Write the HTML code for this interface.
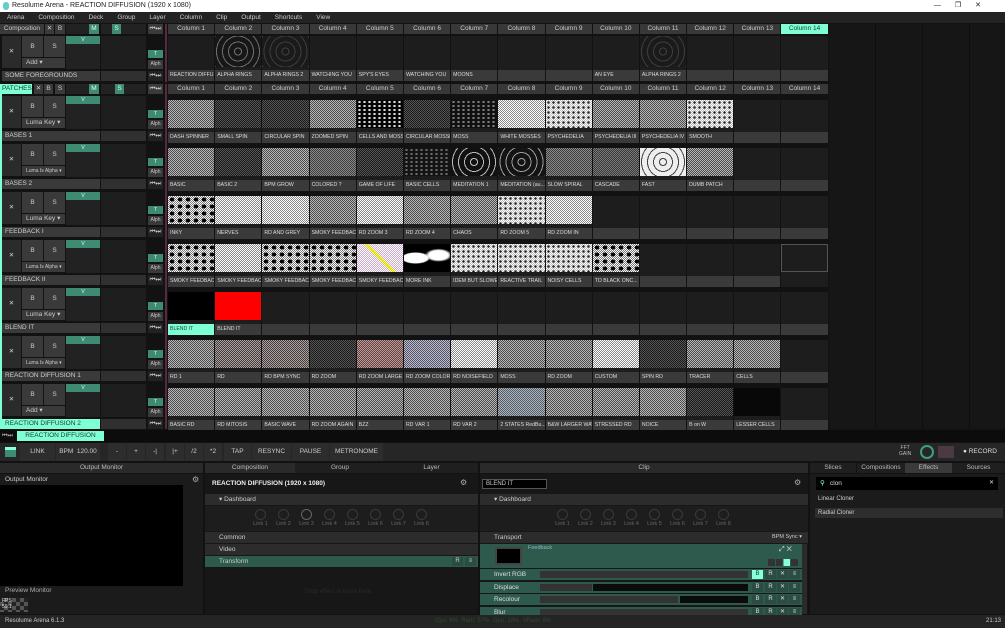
<!DOCTYPE html><html><head><meta charset="utf-8"><style>
*{box-sizing:border-box;margin:0;padding:0}
body{width:1005px;height:628px;background:#121212;font-family:"Liberation Sans",sans-serif;color:#ccc;overflow:hidden;position:relative;font-size:7px}
.a{position:absolute}
.tb{top:0;left:0;width:1005px;height:12px;background:#fff;color:#222;font-size:7px;line-height:12px;padding-left:12px}
.menu{top:12px;left:0;width:1005px;height:11px;background:#232323;color:#ccc;line-height:11px;font-size:6.5px}
.menu span{margin:0 7px}
.bt{position:absolute;background:#3a3a3a;color:#ccc;text-align:center;font-size:6.5px}
.gr{background:#3f8a72;color:#dff}
.cy{background:#7fffd4!important;color:#1a3a33!important}
.cols{position:absolute;left:168px;display:flex}
.cols>div{width:46.2px;margin-right:1px;flex:none}
.h>div{height:10px;background:#383838;text-align:center;line-height:10px;font-size:6.5px}
.c>div{background:#1d1d1d}
.c .t{height:28px}
.c .l{height:11px;margin-top:4px;background:#3a3a3a;font-size:5.2px;line-height:11px;padding-left:2px;white-space:nowrap;overflow:hidden;color:#ddd}
.lay{position:absolute;left:0;width:166px;height:46px}
.sep{position:absolute;left:165px;width:2px;background:#5a2840}
.c .a1{background:repeating-conic-gradient(#b8b8b8 0 25%,#4a4a4a 0 50%) 0 0/2px 2px}
.c .b1{background:repeating-conic-gradient(#555 0 25%,#1a1a1a 0 50%) 0 0/2px 2px}
.c .c1{background:repeating-conic-gradient(#fff 0 25%,#888 0 50%) 0 0/2px 2px}
.c .d1{background:radial-gradient(#222 30%,transparent 40%) 0 0/5px 5px,repeating-conic-gradient(#fff 0 25%,#bbb 0 50%) 0 0/2px 2px}
.c .e1{background:radial-gradient(#ddd 30%,transparent 45%) 0 0/5px 4px,#050505}
.c .f1{background:radial-gradient(#000 35%,transparent 45%) 0 0/8px 7px,repeating-conic-gradient(#fff 0 25%,#777 0 50%) 0 0/2px 2px}
.c .r1{background:repeating-radial-gradient(circle,#111 0 3px,#bbb 3px 4px,#111 4px 6px)}
.c .k{background:#000}
.c .rd{background:#f00}
.c .col{background:repeating-conic-gradient(#9aa 0 25%,#533 0 50%) 0 0/2px 2px}
.pan{position:absolute;background:#1b1b1b}
.ph{position:absolute;height:10px;background:#2a2a2a;text-align:center;line-height:10px;font-size:6.5px;color:#bbb}
.row{position:absolute;height:11px;background:#2c2c2c;font-size:6.5px;line-height:11px;padding-left:14px;color:#ccc}
.kn{display:inline-block;width:20px;text-align:center;font-size:5.5px;color:#666;margin:0 1.5px}
.kn i{display:block;width:11px;height:11px;border:1.5px solid #3a3a3a;border-radius:50%;margin:0 auto 1px}
.fx{position:absolute;left:480px;width:322px;height:11px;background:#2e5a4e;font-size:6.5px;line-height:11px;padding-left:14px;color:#ddd}
.fx b{position:absolute;top:1px;width:11px;height:9px;background:#2a4c42;text-align:center;line-height:9px;font-weight:normal;font-size:6px}
</style></head><body>
<div class="a tb">Resolume Arena - REACTION DIFFUSION (1920 x 1080)<span style="position:absolute;right:10px;letter-spacing:14px">—❐✕</span></div>
<div class="a" style="left:3px;top:2px;width:6px;height:8px;background:#6cc;border-radius:3px"></div>
<div class="a menu"><span>Arena</span><span>Composition</span><span>Deck</span><span>Group</span><span>Layer</span><span>Column</span><span>Clip</span><span>Output</span><span>Shortcuts</span><span>View</span></div>

<div class="a" style="left:829px;top:24px;width:176px;height:405px;background:repeating-linear-gradient(90deg,#161616 0 46px,#0e0e0e 46px 47px)"></div>

<div class="bt" style="left:0;top:24px;width:44px;height:10px;line-height:10px">Composition</div>
<div class="bt" style="left:45px;top:24px;width:9px;height:10px;line-height:10px">✕</div>
<div class="bt" style="left:55px;top:24px;width:10px;height:10px;line-height:10px">B</div>
<div class="bt" style="left:66px;top:24px;width:33px;height:10px;background:#222"></div>
<div class="bt gr" style="left:89px;top:24px;width:10px;height:10px;line-height:10px">M</div>
<div class="bt" style="left:101px;top:24px;width:45px;height:10px;background:#222"></div>
<div class="bt gr" style="left:112px;top:24px;width:9px;height:10px;line-height:10px">S</div>
<div class="bt" style="left:148px;top:24px;width:15px;height:10px;line-height:10px">⏮⏭</div>
<div class="cols h" style="top:24px"><div>Column 1</div><div>Column 2</div><div>Column 3</div><div>Column 4</div><div>Column 5</div><div>Column 6</div><div>Column 7</div><div>Column 8</div><div>Column 9</div><div>Column 10</div><div>Column 11</div><div>Column 12</div><div>Column 13</div><div class="cy">Column 14</div></div>

<div class="bt cy" style="left:0;top:84px;width:32px;height:10px;line-height:10px;text-align:left;padding-left:2px">PATCHES</div>
<div class="bt" style="left:34px;top:84px;width:9px;height:10px;line-height:10px">✕</div>
<div class="bt" style="left:44px;top:84px;width:9px;height:10px;line-height:10px">B</div>
<div class="bt" style="left:55px;top:84px;width:10px;height:10px;line-height:10px">S</div>
<div class="bt" style="left:66px;top:84px;width:33px;height:10px;background:#222"></div>
<div class="bt gr" style="left:89px;top:84px;width:10px;height:10px;line-height:10px">M</div>
<div class="bt" style="left:101px;top:84px;width:45px;height:10px;background:#222"></div>
<div class="bt gr" style="left:115px;top:84px;width:9px;height:10px;line-height:10px">S</div>
<div class="bt" style="left:148px;top:84px;width:15px;height:10px;line-height:10px">⏮⏭</div>
<div class="cols h" style="top:84px"><div>Column 1</div><div>Column 2</div><div>Column 3</div><div>Column 4</div><div>Column 5</div><div>Column 6</div><div>Column 7</div><div>Column 8</div><div>Column 9</div><div>Column 10</div><div>Column 11</div><div>Column 12</div><div>Column 13</div><div>Column 14</div></div>

<div class="a" style="left:0;top:84px;width:2px;height:345px;background:#7fffd4"></div>
<div class="sep" style="top:24px;height:58px"></div>
<div class="sep" style="top:84px;height:345px"></div>

<div class="lay" style="top:36px">
<div class="bt" style="left:2px;top:0;width:19px;height:32px;line-height:32px;background:#2b2b2b">✕</div>
<div class="bt" style="left:22px;top:0;width:21px;height:21px;line-height:21px">B</div>
<div class="bt" style="left:44px;top:0;width:21px;height:21px;line-height:21px">S</div>
<div class="bt" style="left:22px;top:22px;width:43px;height:10px;line-height:10px;text-align:left;padding-left:4px">Add ▾</div>
<div class="bt gr" style="left:66px;top:0;width:34px;height:8px;line-height:8px;font-size:5px">V</div>
<div class="bt" style="left:66px;top:8px;width:34px;height:25px;background:#222"></div>
<div class="bt" style="left:101px;top:0;width:45px;height:33px;background:#1e1e1e"></div>
<div class="bt gr" style="left:148px;top:14px;width:15px;height:8px;line-height:8px;font-size:5px">T</div>
<div class="bt" style="left:148px;top:24px;width:15px;height:9px;line-height:9px;font-size:5px">Alph</div>
<div class="bt" style="left:2px;top:35px;width:98px;height:10px;line-height:10px;text-align:left;padding-left:3px">SOME FOREGROUNDS</div>
<div class="bt" style="left:101px;top:35px;width:45px;height:10px;background:#303030"></div>
<div class="bt" style="left:148px;top:35px;width:15px;height:10px;line-height:10px;background:#222">⏮⏭</div>
</div>
<div class="cols c" style="top:36px"><div><div class="t" style="height:31px"></div><div class="l" style="margin-top:3px">REACTION DIFFU...</div></div><div><div class="t r1" style="height:31px;opacity:.5"></div><div class="l" style="margin-top:3px">ALPHA RINGS</div></div><div><div class="t r1" style="height:31px;opacity:.2"></div><div class="l" style="margin-top:3px">ALPHA RINGS 2</div></div><div><div class="t" style="height:31px"></div><div class="l" style="margin-top:3px">WATCHING YOU</div></div><div><div class="t" style="height:31px"></div><div class="l" style="margin-top:3px">SPY'S EYES</div></div><div><div class="t" style="height:31px"></div><div class="l" style="margin-top:3px">WATCHING YOU</div></div><div><div class="t" style="height:31px"></div><div class="l" style="margin-top:3px">MOONS</div></div><div><div class="t" style="height:31px"></div><div class="l" style="margin-top:3px"></div></div><div><div class="t" style="height:31px"></div><div class="l" style="margin-top:3px"></div></div><div><div class="t" style="height:31px"></div><div class="l" style="margin-top:3px">AN EYE</div></div><div><div class="t r1" style="height:31px;opacity:.2"></div><div class="l" style="margin-top:3px">ALPHA RINGS 2</div></div><div><div class="t" style="height:31px"></div><div class="l" style="margin-top:3px"></div></div><div><div class="t" style="height:31px"></div><div class="l" style="margin-top:3px"></div></div><div><div class="t" style="height:31px"></div><div class="l" style="margin-top:3px"></div></div></div>

<div class="lay" style="top:96px"><div class="bt" style="left:2px;top:0;width:19px;height:32px;line-height:32px;background:#2b2b2b">✕</div><div class="bt" style="left:22px;top:0;width:21px;height:21px;line-height:21px">B</div><div class="bt" style="left:44px;top:0;width:21px;height:21px;line-height:21px">S</div><div class="bt" style="left:22px;top:22px;width:43px;height:10px;line-height:10px;text-align:left;padding-left:4px">Luma Key ▾</div><div class="bt gr" style="left:66px;top:0;width:34px;height:8px;line-height:8px;font-size:5px">V</div><div class="bt" style="left:66px;top:8px;width:34px;height:25px;background:#222"></div><div class="bt" style="left:101px;top:0;width:45px;height:33px;background:#1e1e1e"></div><div class="bt gr" style="left:148px;top:14px;width:15px;height:8px;line-height:8px;font-size:5px">T</div><div class="bt" style="left:148px;top:24px;width:15px;height:9px;line-height:9px;font-size:5px">Alph</div><div class="bt" style="left:2px;top:35px;width:98px;height:10px;line-height:10px;text-align:left;padding-left:3px">BASES 1</div><div class="bt" style="left:101px;top:35px;width:45px;height:10px;background:#303030"></div><div class="bt" style="left:148px;top:35px;width:15px;height:10px;line-height:10px;background:#222">⏮⏭</div></div>
<div class="cols c" style="top:100px"><div><div class="t a1"></div><div class="l">DASH SPINNER</div></div><div><div class="t b1"></div><div class="l">SMALL SPIN</div></div><div><div class="t b1"></div><div class="l">CIRCULAR SPIN</div></div><div><div class="t a1"></div><div class="l">ZOOMED SPIN</div></div><div><div class="t e1"></div><div class="l">CELLS AND MOSSES</div></div><div><div class="t b1"></div><div class="l">CIRCULAR MOSSES</div></div><div><div class="t e1" style="opacity:.5"></div><div class="l">MOSS</div></div><div><div class="t c1"></div><div class="l">WHITE MOSSES</div></div><div><div class="t d1"></div><div class="l">PSYCHEDELIA</div></div><div><div class="t a1"></div><div class="l">PSYCHEDELIA III</div></div><div><div class="t a1"></div><div class="l">PSYCHEDELIA IV</div></div><div><div class="t d1"></div><div class="l">SMOOTH</div></div><div><div class="t"></div><div class="l"></div></div><div><div class="t"></div><div class="l"></div></div></div>

<div class="lay" style="top:144px"><div class="bt" style="left:2px;top:0;width:19px;height:32px;line-height:32px;background:#2b2b2b">✕</div><div class="bt" style="left:22px;top:0;width:21px;height:21px;line-height:21px">B</div><div class="bt" style="left:44px;top:0;width:21px;height:21px;line-height:21px">S</div><div class="bt" style="left:22px;top:22px;width:43px;height:10px;line-height:10px;text-align:left;padding-left:4px;font-size:5px">Luma Is Alpha ▾</div><div class="bt gr" style="left:66px;top:0;width:34px;height:8px;line-height:8px;font-size:5px">V</div><div class="bt" style="left:66px;top:8px;width:34px;height:25px;background:#222"></div><div class="bt" style="left:101px;top:0;width:45px;height:33px;background:#1e1e1e"></div><div class="bt gr" style="left:148px;top:14px;width:15px;height:8px;line-height:8px;font-size:5px">T</div><div class="bt" style="left:148px;top:24px;width:15px;height:9px;line-height:9px;font-size:5px">Alph</div><div class="bt" style="left:2px;top:35px;width:98px;height:10px;line-height:10px;text-align:left;padding-left:3px">BASES 2</div><div class="bt" style="left:101px;top:35px;width:45px;height:10px;background:#303030"></div><div class="bt" style="left:148px;top:35px;width:15px;height:10px;line-height:10px;background:#222">⏮⏭</div></div>
<div class="cols c" style="top:148px"><div><div class="t a1"></div><div class="l">BASIC</div></div><div><div class="t b1"></div><div class="l">BASIC 2</div></div><div><div class="t a1"></div><div class="l">BPM GROW</div></div><div><div class="t a1" style="opacity:.7"></div><div class="l">COLORED ?</div></div><div><div class="t b1"></div><div class="l">GAME OF LIFE</div></div><div><div class="t e1" style="opacity:.4"></div><div class="l">BASIC CELLS</div></div><div><div class="t r1"></div><div class="l">MEDITATION 1</div></div><div><div class="t r1" style="opacity:.8"></div><div class="l">MEDITATION (au...</div></div><div><div class="t a1" style="opacity:.7"></div><div class="l">SLOW SPIRAL</div></div><div><div class="t a1" style="opacity:.6"></div><div class="l">CASCADE</div></div><div><div class="t r1" style="filter:invert(1)"></div><div class="l">FAST</div></div><div><div class="t a1"></div><div class="l">DUMB PATCH</div></div><div><div class="t"></div><div class="l"></div></div><div><div class="t"></div><div class="l"></div></div></div>

<div class="lay" style="top:192px"><div class="bt" style="left:2px;top:0;width:19px;height:32px;line-height:32px;background:#2b2b2b">✕</div><div class="bt" style="left:22px;top:0;width:21px;height:21px;line-height:21px">B</div><div class="bt" style="left:44px;top:0;width:21px;height:21px;line-height:21px">S</div><div class="bt" style="left:22px;top:22px;width:43px;height:10px;line-height:10px;text-align:left;padding-left:4px">Luma Key ▾</div><div class="bt gr" style="left:66px;top:0;width:34px;height:8px;line-height:8px;font-size:5px">V</div><div class="bt" style="left:66px;top:8px;width:34px;height:25px;background:#222"></div><div class="bt" style="left:101px;top:0;width:45px;height:33px;background:#1e1e1e"></div><div class="bt gr" style="left:148px;top:14px;width:15px;height:8px;line-height:8px;font-size:5px">T</div><div class="bt" style="left:148px;top:24px;width:15px;height:9px;line-height:9px;font-size:5px">Alph</div><div class="bt" style="left:2px;top:35px;width:98px;height:10px;line-height:10px;text-align:left;padding-left:3px">FEEDBACK I</div><div class="bt" style="left:101px;top:35px;width:45px;height:10px;background:#303030"></div><div class="bt" style="left:148px;top:35px;width:15px;height:10px;line-height:10px;background:#222">⏮⏭</div></div>
<div class="cols c" style="top:196px"><div><div class="t f1"></div><div class="l">INKY</div></div><div><div class="t c1"></div><div class="l">NERVES</div></div><div><div class="t c1"></div><div class="l">RD AND GREY</div></div><div><div class="t a1"></div><div class="l">SMOKY FEEDBACK</div></div><div><div class="t c1"></div><div class="l">RD ZOOM 3</div></div><div><div class="t a1"></div><div class="l">RD ZOOM 4</div></div><div><div class="t a1"></div><div class="l">CHAOS</div></div><div><div class="t d1"></div><div class="l">RD ZOOM 5</div></div><div><div class="t c1"></div><div class="l">RD ZOOM IN</div></div><div><div class="t"></div><div class="l"></div></div><div><div class="t"></div><div class="l"></div></div><div><div class="t"></div><div class="l"></div></div><div><div class="t"></div><div class="l"></div></div><div><div class="t"></div><div class="l"></div></div></div>

<div class="lay" style="top:240px"><div class="bt" style="left:2px;top:0;width:19px;height:32px;line-height:32px;background:#2b2b2b">✕</div><div class="bt" style="left:22px;top:0;width:21px;height:21px;line-height:21px">B</div><div class="bt" style="left:44px;top:0;width:21px;height:21px;line-height:21px">S</div><div class="bt" style="left:22px;top:22px;width:43px;height:10px;line-height:10px;text-align:left;padding-left:4px;font-size:5px">Luma Is Alpha ▾</div><div class="bt gr" style="left:66px;top:0;width:34px;height:8px;line-height:8px;font-size:5px">V</div><div class="bt" style="left:66px;top:8px;width:34px;height:25px;background:#222"></div><div class="bt" style="left:101px;top:0;width:45px;height:33px;background:#1e1e1e"></div><div class="bt gr" style="left:148px;top:14px;width:15px;height:8px;line-height:8px;font-size:5px">T</div><div class="bt" style="left:148px;top:24px;width:15px;height:9px;line-height:9px;font-size:5px">Alph</div><div class="bt" style="left:2px;top:35px;width:98px;height:10px;line-height:10px;text-align:left;padding-left:3px">FEEDBACK II</div><div class="bt" style="left:101px;top:35px;width:45px;height:10px;background:#303030"></div><div class="bt" style="left:148px;top:35px;width:15px;height:10px;line-height:10px;background:#222">⏮⏭</div></div>
<div class="cols c" style="top:244px"><div><div class="t f1"></div><div class="l">SMOKY FEEDBACK</div></div><div><div class="t c1"></div><div class="l">SMOKY FEEDBACK</div></div><div><div class="t f1"></div><div class="l">SMOKY FEEDBACK</div></div><div><div class="t f1"></div><div class="l">SMOKY FEEDBACK</div></div><div><div class="t" style="background:linear-gradient(45deg,transparent 45%,#ee0 50%,transparent 55%),repeating-conic-gradient(#fff 0 25%,#cac 0 50%) 0 0/2px 2px"></div><div class="l">SMOKY FEEDBACK</div></div><div><div class="t" style="background:radial-gradient(ellipse at 25% 50%,#fff 25%,transparent 30%),radial-gradient(ellipse at 75% 40%,#fff 20%,transparent 28%),#000"></div><div class="l">MORE INK</div></div><div><div class="t d1"></div><div class="l">IDEM BUT SLOWER</div></div><div><div class="t d1"></div><div class="l">REACTIVE TRAIL</div></div><div><div class="t d1"></div><div class="l">NOISY CELLS</div></div><div><div class="t f1"></div><div class="l">TO BLACK ONC...</div></div><div><div class="t"></div><div class="l"></div></div><div><div class="t"></div><div class="l"></div></div><div><div class="t"></div><div class="l"></div></div><div><div class="t" style="border:1px solid #555"></div><div class="l" style="background:#1d1d1d"></div></div></div>

<div class="lay" style="top:288px"><div class="bt" style="left:2px;top:0;width:19px;height:32px;line-height:32px;background:#2b2b2b">✕</div><div class="bt" style="left:22px;top:0;width:21px;height:21px;line-height:21px">B</div><div class="bt" style="left:44px;top:0;width:21px;height:21px;line-height:21px">S</div><div class="bt" style="left:22px;top:22px;width:43px;height:10px;line-height:10px;text-align:left;padding-left:4px">Luma Key ▾</div><div class="bt gr" style="left:66px;top:0;width:34px;height:8px;line-height:8px;font-size:5px">V</div><div class="bt" style="left:66px;top:8px;width:34px;height:25px;background:#222"></div><div class="bt" style="left:101px;top:0;width:45px;height:33px;background:#1e1e1e"></div><div class="bt gr" style="left:148px;top:14px;width:15px;height:8px;line-height:8px;font-size:5px">T</div><div class="bt" style="left:148px;top:24px;width:15px;height:9px;line-height:9px;font-size:5px">Alph</div><div class="bt" style="left:2px;top:35px;width:98px;height:10px;line-height:10px;text-align:left;padding-left:3px">BLEND IT</div><div class="bt" style="left:101px;top:35px;width:45px;height:10px;background:#303030"></div><div class="bt" style="left:148px;top:35px;width:15px;height:10px;line-height:10px;background:#222">⏮⏭</div></div>
<div class="cols c" style="top:292px"><div><div class="t k"></div><div class="l cy">BLEND IT</div></div><div><div class="t rd"></div><div class="l">BLEND IT</div></div><div><div class="t"></div><div class="l"></div></div><div><div class="t"></div><div class="l"></div></div><div><div class="t"></div><div class="l"></div></div><div><div class="t"></div><div class="l"></div></div><div><div class="t"></div><div class="l"></div></div><div><div class="t"></div><div class="l"></div></div><div><div class="t"></div><div class="l"></div></div><div><div class="t"></div><div class="l"></div></div><div><div class="t"></div><div class="l"></div></div><div><div class="t"></div><div class="l"></div></div><div><div class="t"></div><div class="l"></div></div><div><div class="t"></div><div class="l"></div></div></div>

<div class="lay" style="top:336px"><div class="bt" style="left:2px;top:0;width:19px;height:32px;line-height:32px;background:#2b2b2b">✕</div><div class="bt" style="left:22px;top:0;width:21px;height:21px;line-height:21px">B</div><div class="bt" style="left:44px;top:0;width:21px;height:21px;line-height:21px">S</div><div class="bt" style="left:22px;top:22px;width:43px;height:10px;line-height:10px;text-align:left;padding-left:4px;font-size:5px">Luma Is Alpha ▾</div><div class="bt gr" style="left:66px;top:0;width:34px;height:8px;line-height:8px;font-size:5px">V</div><div class="bt" style="left:66px;top:8px;width:34px;height:25px;background:#222"></div><div class="bt" style="left:101px;top:0;width:45px;height:33px;background:#1e1e1e"></div><div class="bt gr" style="left:148px;top:14px;width:15px;height:8px;line-height:8px;font-size:5px">T</div><div class="bt" style="left:148px;top:24px;width:15px;height:9px;line-height:9px;font-size:5px">Alph</div><div class="bt" style="left:2px;top:35px;width:98px;height:10px;line-height:10px;text-align:left;padding-left:3px">REACTION DIFFUSION 1</div><div class="bt" style="left:101px;top:35px;width:45px;height:10px;background:#303030"></div><div class="bt" style="left:148px;top:35px;width:15px;height:10px;line-height:10px;background:#222">⏮⏭</div></div>
<div class="cols c" style="top:340px"><div><div class="t a1"></div><div class="l">RD 1</div></div><div><div class="t col"></div><div class="l">RD</div></div><div><div class="t col"></div><div class="l">RD BPM SYNC</div></div><div><div class="t b1"></div><div class="l">RD ZOOM</div></div><div><div class="t" style="background:repeating-conic-gradient(#c99 0 25%,#544 0 50%) 0 0/2px 2px"></div><div class="l">RD ZOOM LARGE</div></div><div><div class="t" style="background:repeating-conic-gradient(#aca 0 25%,#648 0 50%) 0 0/2px 2px"></div><div class="l">RD ZOOM COLORED</div></div><div><div class="t c1"></div><div class="l">RD NOISEFIELD</div></div><div><div class="t a1"></div><div class="l">MOSS</div></div><div><div class="t a1"></div><div class="l">RD ZOOM</div></div><div><div class="t c1"></div><div class="l">CUSTOM</div></div><div><div class="t b1"></div><div class="l">SPIN RD</div></div><div><div class="t a1"></div><div class="l">TRACER</div></div><div><div class="t a1"></div><div class="l">CELLS</div></div><div><div class="t"></div><div class="l"></div></div></div>

<div class="lay" style="top:384px"><div class="bt" style="left:2px;top:0;width:19px;height:32px;line-height:32px;background:#2b2b2b">✕</div><div class="bt" style="left:22px;top:0;width:21px;height:21px;line-height:21px">B</div><div class="bt" style="left:44px;top:0;width:21px;height:21px;line-height:21px">S</div><div class="bt" style="left:22px;top:22px;width:43px;height:10px;line-height:10px;text-align:left;padding-left:4px">Add ▾</div><div class="bt gr" style="left:66px;top:0;width:34px;height:8px;line-height:8px;font-size:5px">V</div><div class="bt" style="left:66px;top:8px;width:34px;height:25px;background:#222"></div><div class="bt" style="left:101px;top:0;width:45px;height:33px;background:#1e1e1e"></div><div class="bt gr" style="left:148px;top:14px;width:15px;height:8px;line-height:8px;font-size:5px">T</div><div class="bt" style="left:148px;top:24px;width:15px;height:9px;line-height:9px;font-size:5px">Alph</div><div class="bt cy" style="left:2px;top:35px;width:98px;height:10px;line-height:10px;text-align:left;padding-left:3px">REACTION DIFFUSION 2</div><div class="bt" style="left:101px;top:35px;width:45px;height:10px;background:#303030"></div><div class="bt" style="left:148px;top:35px;width:15px;height:10px;line-height:10px;background:#222">⏮⏭</div></div>
<div class="cols c" style="top:388px"><div><div class="t a1"></div><div class="l">BASIC RD</div></div><div><div class="t a1"></div><div class="l">RD MITOSIS</div></div><div><div class="t a1"></div><div class="l">BASIC WAVE</div></div><div><div class="t a1"></div><div class="l">RD ZOOM AGAIN</div></div><div><div class="t a1"></div><div class="l">BZZ</div></div><div><div class="t a1"></div><div class="l">RD VAR 1</div></div><div><div class="t a1"></div><div class="l">RD VAR 2</div></div><div><div class="t" style="background:repeating-conic-gradient(#9c8 0 25%,#649 0 50%) 0 0/2px 2px"></div><div class="l">2 STATES RedBu...</div></div><div><div class="t a1"></div><div class="l">B&amp;W LARGER WAVE</div></div><div><div class="t a1"></div><div class="l">STRESSED RD</div></div><div><div class="t a1"></div><div class="l">NOICE</div></div><div><div class="t b1"></div><div class="l">B on W</div></div><div><div class="t" style="background:#080808"></div><div class="l">LESSER CELLS</div></div><div><div class="t"></div><div class="l"></div></div></div>

<div class="a" style="left:0;top:430px;width:1005px;height:12px;background:#0c0c0c"></div>
<div class="a" style="left:2px;top:433px;font-size:6px;color:#aaa">⏮⏭</div>
<div class="bt cy" style="left:17px;top:431px;width:87px;height:10px;line-height:10px">REACTION DIFFUSION</div>

<div class="a" style="left:0;top:443px;width:1005px;height:18px;background:#262626"></div>
<div class="a" style="left:5px;top:447px;width:11px;height:10px;background:#3f8a72;border-top:3px solid #8fd"></div>
<div class="bt" style="left:20px;top:443px;width:35px;height:18px;line-height:18px;background:#2d2d2d">LINK</div>
<div class="bt" style="left:56px;top:443px;width:44px;height:18px;line-height:18px;background:#2d2d2d">BPM &nbsp;120.00</div>
<div class="bt" style="left:108px;top:443px;width:18px;height:18px;line-height:18px;background:#2d2d2d">-</div>
<div class="bt" style="left:127px;top:443px;width:18px;height:18px;line-height:18px;background:#2d2d2d">+</div>
<div class="bt" style="left:146px;top:443px;width:18px;height:18px;line-height:18px;background:#2d2d2d">-|</div>
<div class="bt" style="left:166px;top:443px;width:18px;height:18px;line-height:18px;background:#2d2d2d">|+</div>
<div class="bt" style="left:185px;top:443px;width:18px;height:18px;line-height:18px;background:#2d2d2d">/2</div>
<div class="bt" style="left:204px;top:443px;width:18px;height:18px;line-height:18px;background:#2d2d2d">*2</div>
<div class="bt" style="left:224px;top:443px;width:27px;height:18px;line-height:18px;background:#2d2d2d">TAP</div>
<div class="bt" style="left:252px;top:443px;width:39px;height:18px;line-height:18px;background:#2d2d2d">RESYNC</div>
<div class="bt" style="left:292px;top:443px;width:37px;height:18px;line-height:18px;background:#2d2d2d">PAUSE</div>
<div class="bt" style="left:330px;top:443px;width:53px;height:18px;line-height:18px;background:#2d2d2d">METRONOME</div>
<div class="a" style="left:899px;top:446px;font-size:5px;line-height:5.5px;text-align:center;color:#bbb">FFT<br>GAIN</div>
<div class="a" style="left:920px;top:445px;width:14px;height:14px;border:2px solid #3f9c85;border-radius:50%"></div>
<div class="a" style="left:938px;top:446px;width:16px;height:12px;background:#4a3a44"></div>
<div class="a" style="left:963px;top:448px;font-size:6.5px;color:#ddd">● RECORD</div>

<div class="ph" style="left:0;top:463px;width:203px">Output Monitor</div>
<div class="ph" style="left:205px;top:463px;width:90px">Composition</div>
<div class="ph" style="left:295px;top:463px;width:90px;background:#1f1f1f">Group</div>
<div class="ph" style="left:385px;top:463px;width:93px;background:#1f1f1f">Layer</div>
<div class="ph" style="left:480px;top:463px;width:328px">Clip</div>
<div class="ph" style="left:810px;top:463px;width:46px;background:#1f1f1f">Slices</div>
<div class="ph" style="left:857px;top:463px;width:48px;background:#1f1f1f">Compositions</div>
<div class="ph" style="left:905px;top:463px;width:47px;background:#3a3a3a">Effects</div>
<div class="ph" style="left:952px;top:463px;width:53px;background:#1f1f1f">Sources</div>

<div class="pan" style="left:0;top:474px;width:203px;height:140px"></div>
<div class="a" style="left:5px;top:476px;font-size:6.5px">Output Monitor</div>
<div class="a" style="left:192px;top:475px;font-size:8px;color:#aaa">⚙</div>
<div class="a" style="left:0;top:485px;width:183px;height:101px;background:#000"></div>
<div class="a" style="left:5px;top:587px;font-size:6.5px;color:#aaa">Preview Monitor</div>
<div class="a" style="left:0;top:598px;width:28px;height:14px;background:repeating-conic-gradient(#555 0 25%,#222 0 50%) 0 0/8px 8px;font-size:5px;line-height:6px;color:#ddd;padding-left:2px">FPS<br>59.1</div>

<div class="pan" style="left:205px;top:474px;width:273px;height:140px;background:#171717"></div>
<div class="a" style="left:212px;top:480px;font-size:6.5px;font-weight:bold;color:#eee">REACTION DIFFUSION (1920 x 1080)</div>
<div class="a" style="left:460px;top:478px;font-size:8px;color:#aaa">⚙</div>
<div class="row" style="left:205px;top:494px;width:273px">▾ Dashboard</div>
<div class="a" style="left:205px;top:506px;width:273px;height:25px;background:#1d1d1d;padding-left:44px;padding-top:3px"><span class="kn"><i></i>Link 1</span><span class="kn"><i></i>Link 2</span><span class="kn"><i style="border-color:#666"></i>Link 3</span><span class="kn"><i></i>Link 4</span><span class="kn"><i></i>Link 5</span><span class="kn"><i></i>Link 6</span><span class="kn"><i></i>Link 7</span><span class="kn"><i></i>Link 8</span></div>
<div class="row" style="left:205px;top:532px;width:273px">Common</div>
<div class="row" style="left:205px;top:544px;width:273px">Video</div>
<div class="row" style="left:205px;top:556px;width:273px;background:#2e5a4e">Transform</div>
<div class="a" style="left:452px;top:557px;width:11px;height:9px;background:#2a4c42;font-size:6px;text-align:center;line-height:9px">R</div>
<div class="a" style="left:465px;top:557px;width:11px;height:9px;background:#2a4c42;font-size:6px;text-align:center;line-height:9px">≡</div>
<div class="a" style="left:305px;top:589px;font-size:6px;color:#2a2a2a">Drop effect or mask here.</div>

<div class="pan" style="left:480px;top:474px;width:328px;height:140px;background:#171717"></div>
<div class="a" style="left:482px;top:479px;width:65px;height:10px;border:1px solid #555;background:#000;font-size:6px;line-height:8px;padding-left:3px">BLEND IT</div>
<div class="a" style="left:794px;top:478px;font-size:8px;color:#aaa">⚙</div>
<div class="row" style="left:480px;top:494px;width:328px">▾ Dashboard</div>
<div class="a" style="left:480px;top:506px;width:328px;height:25px;background:#1d1d1d;padding-left:71px;padding-top:3px"><span class="kn"><i></i>Link 1</span><span class="kn"><i></i>Link 2</span><span class="kn"><i></i>Link 3</span><span class="kn"><i></i>Link 4</span><span class="kn"><i></i>Link 5</span><span class="kn"><i></i>Link 6</span><span class="kn"><i></i>Link 7</span><span class="kn"><i></i>Link 8</span></div>
<div class="row" style="left:480px;top:532px;width:328px">Transport<span style="position:absolute;right:6px;font-size:5.5px">BPM Sync ▾</span></div>
<div class="a" style="left:480px;top:544px;width:322px;height:24px;background:#2e5a4e"></div>
<div class="a" style="left:495px;top:547px;width:27px;height:18px;background:#000;border:2px solid #444"></div>
<div class="a" style="left:528px;top:545px;font-size:5.5px;color:#8bb">Feedback</div>
<div class="a" style="left:779px;top:546px;font-size:7px;color:#ddd">⤢ ✕</div>
<div class="a" style="left:768px;top:559px;width:30px;height:7px;background:linear-gradient(90deg,#333 0 24%,transparent 24% 26%,#333 26% 49%,transparent 49% 51%,#8fd 51% 74%,transparent 74% 76%,#333 76%)"></div>
<div class="fx" style="top:569px">Invert RGB<div class="a" style="left:60px;top:2px;width:208px;height:7px;background:#333"></div><b style="left:272px;background:#8fd;color:#143">B</b><b style="left:285px">R</b><b style="left:297px">✕</b><b style="left:309px">≡</b></div>
<div class="fx" style="top:582px">Displace<div class="a" style="left:60px;top:2px;width:52px;height:7px;background:#333"></div><div class="a" style="left:113px;top:2px;width:155px;height:7px;background:#0b0b0b"></div><b style="left:272px">B</b><b style="left:285px">R</b><b style="left:297px">✕</b><b style="left:309px">≡</b></div>
<div class="fx" style="top:594px">Recolour<div class="a" style="left:60px;top:2px;width:138px;height:7px;background:#333"></div><div class="a" style="left:200px;top:2px;width:68px;height:7px;background:#0b0b0b"></div><b style="left:272px">B</b><b style="left:285px">R</b><b style="left:297px">✕</b><b style="left:309px">≡</b></div>
<div class="fx" style="top:607px;height:8px">Blur<div class="a" style="left:60px;top:2px;width:208px;height:6px;background:#333"></div><b style="left:272px">B</b><b style="left:285px">R</b><b style="left:297px">✕</b><b style="left:309px">≡</b></div>
<div class="a" style="left:802px;top:544px;width:5px;height:70px;background:#2a2a2a"></div>

<div class="pan" style="left:810px;top:474px;width:195px;height:140px"></div>
<div class="a" style="left:816px;top:477px;width:182px;height:13px;background:#000;font-size:6.5px;line-height:13px;padding-left:14px;color:#ddd">clon<span style="position:absolute;left:4px;color:#8fd">⚲</span><span style="position:absolute;right:4px;font-size:6px">✕</span></div>
<div class="a" style="left:818px;top:496px;font-size:6px;color:#ccc">Linear Cloner</div>
<div class="a" style="left:815px;top:508px;width:188px;height:10px;background:#2e2e2e;font-size:6px;line-height:10px;padding-left:3px;color:#ccc">Radial Cloner</div>

<div class="a" style="left:0;top:615px;width:1005px;height:13px;background:#242424;font-size:6px;line-height:13px;padding-left:5px;color:#ccc">Resolume Arena 6.1.3<span style="position:absolute;left:435px;color:#2f4a2f">Cpu: 6% &nbsp;Ram: 57% &nbsp;Gpu: 18% &nbsp;VRam: 6%</span><span style="position:absolute;right:4px">21:13</span></div>
</body></html>
